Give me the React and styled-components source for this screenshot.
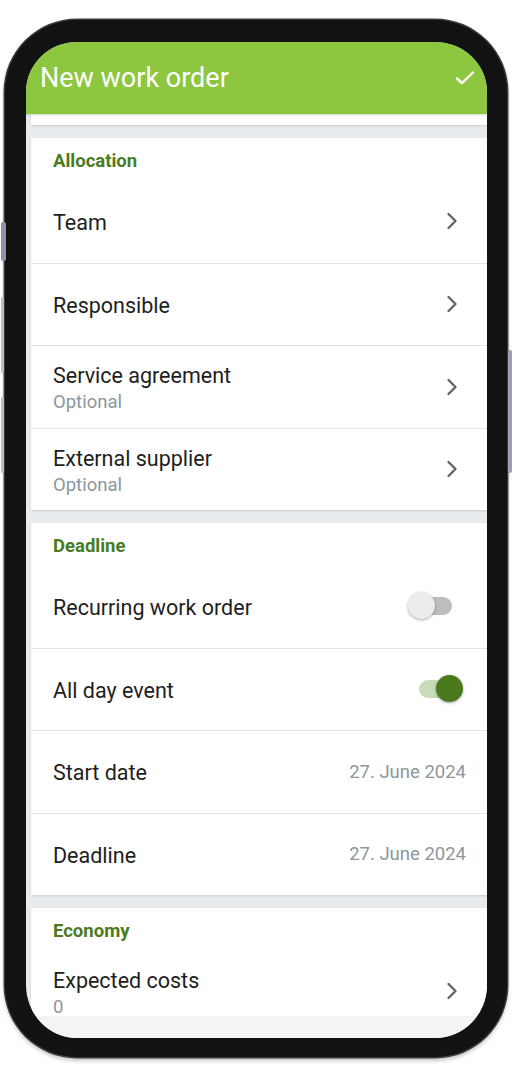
import React from 'react';
import styled, { createGlobalStyle } from 'styled-components';

const GlobalStyle = createGlobalStyle`
  html, body {
    margin: 0;
    padding: 0;
    background: #ffffff;
  }
  body {
    font-family: Roboto, 'Liberation Sans', sans-serif;
    -webkit-font-smoothing: antialiased;
  }
`;

const Page = styled.div`
  width: 512px;
  height: 1081px;
  box-sizing: border-box;
  padding: 20px 0 0 5px;
  overflow: hidden;
`;

const Device = styled.div`
  position: relative;
  width: 502px;
  height: 1037px;
`;

const SideKey = styled.div`
  position: absolute;
  top: ${p => p.top}px;
  height: ${p => p.h}px;
  width: ${p => p.w}px;
  ${p => (p.side === 'right' ? 'right: -5px;' : 'left: -4px;')}
  background: ${p => p.color};
  border-radius: 2px;
`;

const Frame = styled.div`
  box-sizing: border-box;
  width: 100%;
  height: 100%;
  border-style: solid;
  border-color: #121212;
  border-width: 22px 20px 19px 21px;
  border-radius: 72px;
  box-shadow: 0 0 0 1.5px #3a3a3a, 0 3px 5px rgba(0, 0, 0, 0.3);
  overflow: hidden;
  background: #e9ecee;
  display: flex;
  flex-direction: column;
`;

const Header = styled.div`
  flex-shrink: 0;
  height: 72px;
  background: #8dc63f;
  display: flex;
  align-items: center;
  justify-content: space-between;
  padding: 0 12px 0 14px;
  color: #ffffff;
  font-size: 27px;
  box-shadow: 0 1px 2px rgba(0, 0, 0, 0.18);
  position: relative;
  z-index: 1;
`;

const Content = styled.div`
  flex: 1;
  overflow: hidden;
  padding-left: 5px;
  display: flex;
  flex-direction: column;
  gap: 13px;
`;

const StubCard = styled.div`
  flex-shrink: 0;
  height: 11px;
  background: #ffffff;
  box-shadow: 0 1px 2px rgba(0, 0, 0, 0.14);
`;

const Card = styled.div`
  flex-shrink: 0;
  background: #ffffff;
  box-shadow: 0 1px 2px rgba(0, 0, 0, 0.14);
`;

const SectionTitle = styled.div`
  box-sizing: border-box;
  height: 42px;
  display: flex;
  align-items: center;
  padding: 3px 0 0 22px;
  color: #4b7b1f;
  font-size: 18.5px;
  font-weight: 700;
`;

const Row = styled.div`
  box-sizing: border-box;
  height: 82.5px;
  display: flex;
  align-items: center;
  padding: 0 21px 0 22px;
  & + & {
    border-top: 1px solid #e2e3e4;
  }
`;

const Labels = styled.div`
  flex: 1;
  display: flex;
  flex-direction: column;
  justify-content: center;
  padding-top: 3px;
`;

const Label = styled.div`
  color: #1e1e1e;
  font-size: 21.5px;
  line-height: 28px;
`;

const Hint = styled.div`
  color: #8b979d;
  font-size: 18.5px;
  line-height: 24px;
`;

const Value = styled.div`
  color: #8b979d;
  font-size: 18.5px;
`;

const Chevron = styled.svg`
  width: 12px;
  height: 18px;
  margin-right: 8px;
  flex-shrink: 0;
`;

const BottomBar = styled.div`
  flex-shrink: 0;
  height: 22px;
  background: #f3f4f6;
`;

const SwitchWrap = styled.div`
  position: relative;
  width: 55px;
  height: 28px;
  margin-right: 3px;
  display: flex;
  align-items: center;
`;

const Track = styled.div`
  width: 42px;
  height: 18px;
  border-radius: 9px;
  margin-left: ${p => (p.on ? 11 : 2)}px;
  background: ${p => (p.on ? '#c9dcba' : '#bdbdbd')};
`;

const Thumb = styled.div`
  position: absolute;
  top: 0;
  left: ${p => (p.on ? 28 : 0)}px;
  width: 27px;
  height: 27px;
  border-radius: 50%;
  background: ${p => (p.on ? '#4a7a1c' : '#ececec')};
  box-shadow: 0 1px 3px rgba(0, 0, 0, 0.35);
`;

function ChevronRight() {
  return (
    <Chevron viewBox="0 0 12 18">
      <polyline points="2.5,2 9.5,9 2.5,16" fill="none" stroke="#666" strokeWidth="2.4" strokeLinecap="round" strokeLinejoin="round" />
    </Chevron>
  );
}

function CheckIcon() {
  return (
    <svg width="20" height="16" viewBox="0 0 20 16">
      <polyline points="2,8.5 7,13 18,2.5" fill="none" stroke="#fff" strokeWidth="2.4" strokeLinecap="round" strokeLinejoin="round" />
    </svg>
  );
}

function Switch({ on }) {
  return (
    <SwitchWrap>
      <Track on={on ? 1 : 0} />
      <Thumb on={on ? 1 : 0} />
    </SwitchWrap>
  );
}

function NavRow({ label, hint }) {
  return (
    <Row>
      <Labels>
        <Label>{label}</Label>
        {hint !== undefined && <Hint>{hint}</Hint>}
      </Labels>
      <ChevronRight />
    </Row>
  );
}

function ToggleRow({ label, on }) {
  return (
    <Row>
      <Labels>
        <Label>{label}</Label>
      </Labels>
      <Switch on={on} />
    </Row>
  );
}

function DateRow({ label, value }) {
  return (
    <Row>
      <Labels>
        <Label>{label}</Label>
      </Labels>
      <Value>{value}</Value>
    </Row>
  );
}

export default function App() {
  return (
    <>
      <GlobalStyle />
      <Page>
        <Device>
          <SideKey side="left" top={202} h={39} w={5} color="#9a8dab" />
          <SideKey side="left" top={277} h={76} w={3} color="#c2bace" />
          <SideKey side="left" top={377} h={76} w={3} color="#c2bace" />
          <SideKey side="right" top={330} h={123} w={4} color="#a598b4" />
          <Frame>
            <Header>
              <span>New work order</span>
              <CheckIcon />
            </Header>
            <Content>
              <StubCard />
              <Card>
                <SectionTitle>Allocation</SectionTitle>
                <NavRow label="Team" />
                <NavRow label="Responsible" />
                <NavRow label="Service agreement" hint="Optional" />
                <NavRow label="External supplier" hint="Optional" />
              </Card>
              <Card>
                <SectionTitle>Deadline</SectionTitle>
                <ToggleRow label="Recurring work order" on={false} />
                <ToggleRow label="All day event" on />
                <DateRow label="Start date" value="27. June 2024" />
                <DateRow label="Deadline" value="27. June 2024" />
              </Card>
              <Card>
                <SectionTitle>Economy</SectionTitle>
                <NavRow label="Expected costs" hint="0" />
              </Card>
            </Content>
            <BottomBar />
          </Frame>
        </Device>
      </Page>
    </>
  );
}
